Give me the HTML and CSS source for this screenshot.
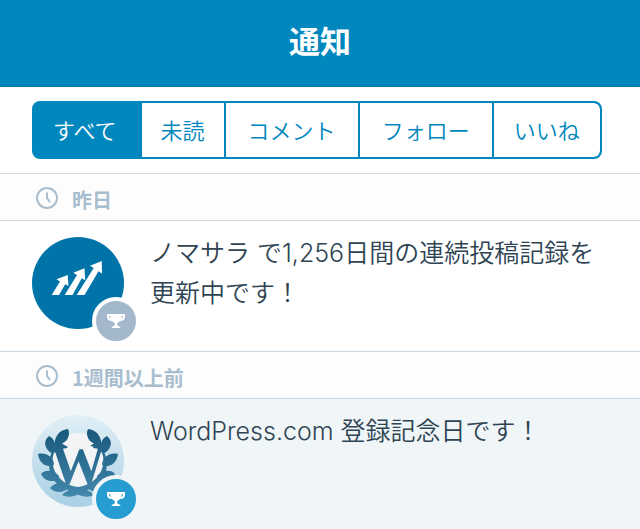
FILE: index.html
```html
<!DOCTYPE html>
<html lang="ja">
  <head>
    <meta charset="utf-8">
    <meta name="viewport" content="width=device-width, initial-scale=1">
    <title>通知</title>
    <link rel="stylesheet" href="styles.css">
  </head>
  <body>
    <!-- shared icons -->
    <svg class="sprite" aria-hidden="true">
      <symbol id="icon-clock" viewBox="0 0 24 24">
        <circle cx="12" cy="12" r="10" fill="none" stroke="currentColor" stroke-width="2"/>
        <path d="M12 6.500V12l3 4.200" fill="none" stroke="currentColor" stroke-width="2"/>
      </symbol>
      <symbol id="icon-trophy" viewBox="0 0 24 24">
        <path fill="currentColor" fill-rule="evenodd" d="M3 5h18v3c0 2.500-2 4-5 4-1 1-1.800 1.700-2.700 2v2.500l3 1.500v1H7.700v-1l3-1.500V14c-.9-.3-1.700-1-2.700-2-3 0-5-1.500-5-4zM5 7c0 1.600.8 2.600 2 3-.5-1-.8-2-.9-3zM19 7h-1.100c-.1 1-.4 2-.9 3 1.200-.4 2-1.400 2-3z"/>
      </symbol>
    </svg>

    <header class="header">
      <h1>通知</h1>
    </header>

    <nav class="filters">
      <div class="tabs">
        <button type="button" class="tab active" aria-pressed="true">すべて</button>
        <button type="button" class="tab narrow">未読</button>
        <button type="button" class="tab wide">コメント</button>
        <button type="button" class="tab wide">フォロー</button>
        <button type="button" class="tab">いいね</button>
      </div>
    </nav>

    <main>
      <h2 class="group"><svg class="clock"><use href="#icon-clock"/></svg>昨日</h2>
      <a class="note" href="#streak">
        <div class="avatar">
          <svg viewBox="0 0 92 92">
            <circle cx="46" cy="46" r="46" fill="#0074a8"/>
            <g fill="#fff">
              <path d="M19.700 58l8.300-13.500-3.500-2.200L35.700 38l.8 11-3.300-1.800L27 58z"/>
              <path d="M32.700 58L45 38l-3.700-2.300 11.200-4.500.7 12-3.500-2L40.500 58z"/>
              <path d="M44.700 58l17-27-3.700-2.300L69.700 24l.3 12.500-3.500-2.200L52.500 58z"/>
            </g>
          </svg>
          <span class="badge"><svg><use href="#icon-trophy"/></svg></span>
        </div>
        <p>ノマサラ で1,256日間の連続投稿記録を更新中です！</p>
      </a>

      <h2 class="group"><svg class="clock"><use href="#icon-clock"/></svg>1週間以上前</h2>
      <a class="note unread" href="#anniversary">
        <div class="avatar">
          <svg viewBox="0 0 92 92">
            <defs>
              <linearGradient id="sky" x1="0" y1="0" x2="0" y2="1">
                <stop offset="0" stop-color="#e1eff6"/>
                <stop offset="1" stop-color="#a9d0e4"/>
              </linearGradient>
              <linearGradient id="leaf" gradientUnits="userSpaceOnUse" x1="0" y1="14" x2="0" y2="82">
                <stop offset="0" stop-color="#17577a"/>
                <stop offset="1" stop-color="#4388ad"/>
              </linearGradient>
              <g id="branch">
                <path d="M26 28c-12 12-12 34 2 43 5 4 12 4 19 8v-7C30 71 18 56 21 41c1-4 3-7 7-9l6-1-6-4z"/>
                <path d="M22 34c0-11 4-19 14-20 3 6-1 14-8 15z"/>
                <path d="M19 38C11 32 12 25 17 21c6 3 7 9 6 15z"/>
                <path d="M21 51C12 52 7 47 6 39c8-2 15 3 16 10z"/>
                <path d="M27 64c-7 4-15 2-18-5 4-5 13-4 18 2z"/>
                <path d="M37 72c-4 6-14 7-19 1 4-5 12-7 18-4z"/>
                <path d="M51 76c-6 6-15 7-21 4 4-4 9-7 18-7z"/>
              </g>
            </defs>
            <circle cx="46" cy="46" r="46" fill="url(#sky)"/>
            <circle cx="46" cy="45" r="27" fill="#f3f4f6"/>
            <g fill="url(#leaf)">
              <use href="#branch"/>
              <use href="#branch" transform="translate(92 0) scale(-1 1)"/>
              <text class="mark" x="46" y="69" text-anchor="middle">W</text>
            </g>
          </svg>
          <span class="badge"><svg><use href="#icon-trophy"/></svg></span>
        </div>
        <p>WordPress.com 登録記念日です！</p>
      </a>
    </main>
  </body>
</html>
```

FILE: styles.css
```css
* {
  box-sizing: border-box;
}

body {
  margin: 0;
  min-height: 100vh;
  display: flex;
  flex-direction: column;
  background: #fff;
  color: #2e4453;
  font-family: "Noto Sans CJK JP", sans-serif;
}

.sprite {
  display: none;
}

.header {
  padding: 20px 0 25px;
  background: #0087be;
  border-bottom: 2px solid #007bae;
  text-align: center;
}

.header h1 {
  margin: 0;
  color: #fff;
  font-size: 31px;
  line-height: 40px;
  font-weight: 700;
}

.filters {
  padding: 14px 32px;
}

.tabs {
  display: inline-flex;
  vertical-align: top;
  border: 2px solid #0087be;
  border-radius: 8px;
  background: #0087be;
  overflow: hidden;
}

.tab {
  padding: 0 20px 2px;
  border: 0;
  background: #fff;
  color: #0087be;
  font-family: inherit;
  font-size: 22px;
  font-weight: 350;
  line-height: 52px;
  white-space: nowrap;
}

.tab + .tab {
  margin-left: 2px;
}

.tab:last-child {
  border-radius: 0 6px 6px 0;
}

.tab.narrow {
  padding: 0 19px 2px;
}

.tab.wide {
  padding: 0 22px 2px;
}

.tab.active {
  padding: 0 21px 2px 19px;
  border-right: 2px solid #0087be;
  background: #0087be;
  color: #fff;
}

main {
  flex: 1;
  display: flex;
  flex-direction: column;
}

.group {
  display: flex;
  align-items: center;
  gap: 13px;
  margin: 0;
  padding: 6px 35px 0;
  border: 1px solid #c8d7e1;
  border-width: 1px 0;
  background: #fdfdfd;
  color: #a8bece;
  font-size: 20px;
  line-height: 40px;
  font-weight: 700;
}

.clock {
  width: 24px;
  height: 24px;
  margin-bottom: 4px;
}

.note {
  display: flex;
  align-items: flex-start;
  gap: 26px;
  min-height: 130px;
  padding: 12px 32px;
  background: #fff;
  color: #2e4453;
  text-decoration: none;
}

.note p {
  flex: 1;
  margin: 0;
  font-family: Inter, "Noto Sans CJK JP", sans-serif;
  font-size: 25px;
  line-height: 40px;
  font-weight: 350;
}

.note.unread {
  flex: 1;
  background: #f0f5f8;
}

.avatar {
  position: relative;
  width: 92px;
  height: 92px;
  margin-top: 4px;
}

.avatar > svg {
  display: block;
  width: 100%;
  height: 100%;
}

.badge {
  position: absolute;
  right: -16px;
  bottom: -16px;
  width: 48px;
  height: 48px;
  display: flex;
  align-items: center;
  justify-content: center;
  border: 4px solid #fff;
  border-radius: 50%;
  background: #a3b8cb;
  color: #fff;
}

.badge svg {
  width: 24px;
  height: 24px;
}

.unread .badge {
  background: #269cd1;
  border-color: #f0f5f8;
}

.mark {
  font-family: "Liberation Serif", serif;
  font-size: 56px;
  font-weight: 700;
}
```
